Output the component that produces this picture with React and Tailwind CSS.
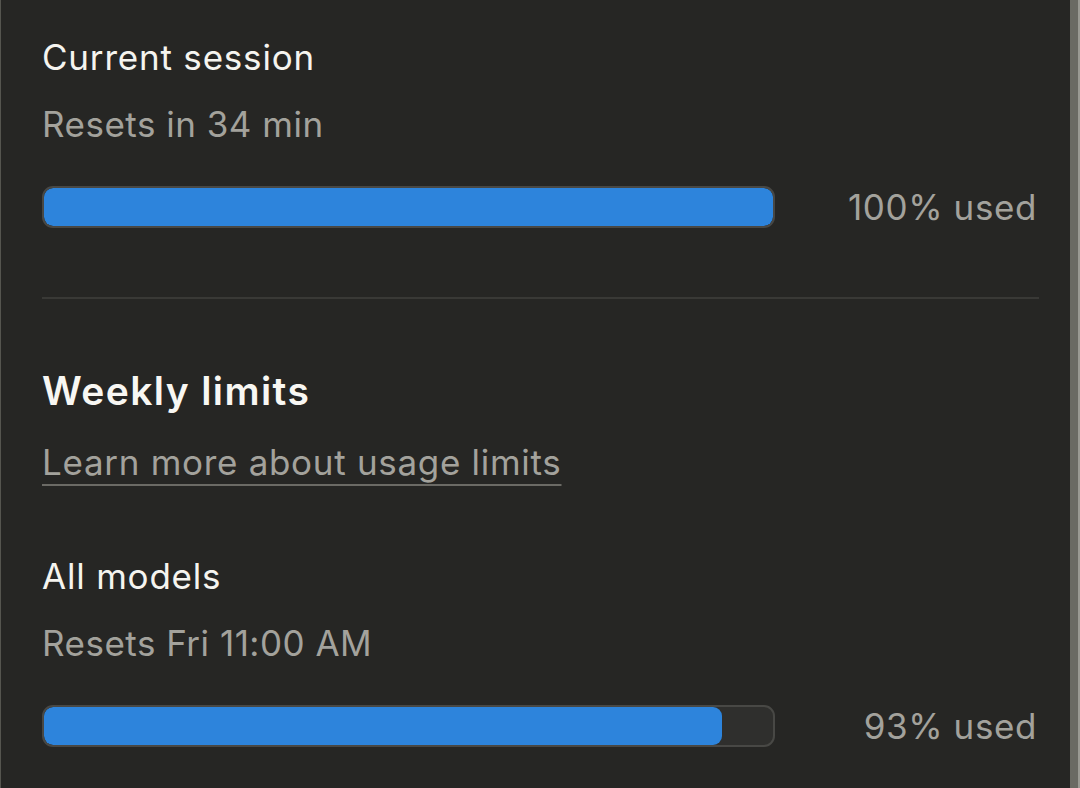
const Bar = ({ pct, label }) => (
  <div className="flex items-center">
    <div className="w-[733px] h-[42px] rounded-[11px] border-2 border-[#484845] bg-[#2f2f2d] overflow-hidden">
      <div className="h-full rounded-[9px] bg-[#2d84dc]" style={{ width: `${pct}%` }} />
    </div>
    <div className="flex-1 text-right text-[35px] leading-[40px] tracking-[0.6px] text-[#a3a29c]">{label}</div>
  </div>
);

export default function App() {
  return (
    <div
      className="w-[1080px] h-[788px] overflow-hidden bg-[#262624] flex"
      style={{ fontFamily: "Inter, 'Noto Sans', sans-serif" }}
    >
      <div className="w-px bg-[#55554f]" />
      <div className="flex-1 pl-[41px] pr-[33px] pt-[37px]">
        <div className="text-[35px] leading-[40px] tracking-[0.8px] text-[#f5f4ef]">Current session</div>
        <div className="mt-[27px] text-[35px] leading-[40px] tracking-[0.5px] text-[#a3a29c]">Resets in 34 min</div>
        <div className="mt-[42px]">
          <Bar pct={100} label="100% used" />
        </div>
        <div className="mt-[69px] mr-[-2px] h-[2px] bg-[#393936]" />

        <div className="mt-[72px] text-[39px] leading-[40px] font-semibold tracking-[1.4px] text-[#f8f7f3]">Weekly limits</div>
        <div className="mt-[31px] text-[35px] leading-[40px] tracking-[0.7px]">
          <a className="text-[#a3a29c] underline decoration-2 decoration-[#6b6a65] underline-offset-[9px]">
            Learn more about usage limits
          </a>
        </div>
        <div className="mt-[74px] text-[35px] leading-[40px] tracking-[0.8px] text-[#f5f4ef]">All models</div>
        <div className="mt-[27px] text-[35px] leading-[40px] tracking-[0.5px] text-[#a3a29c]">Resets Fri 11:00 AM</div>
        <div className="mt-[42px]">
          <Bar pct={93} label="93% used" />
        </div>
      </div>
      <div className="w-[8px] bg-[#6a6a63]" />
      <div className="w-[2px] bg-[#9a9a93]" />
    </div>
  );
}
